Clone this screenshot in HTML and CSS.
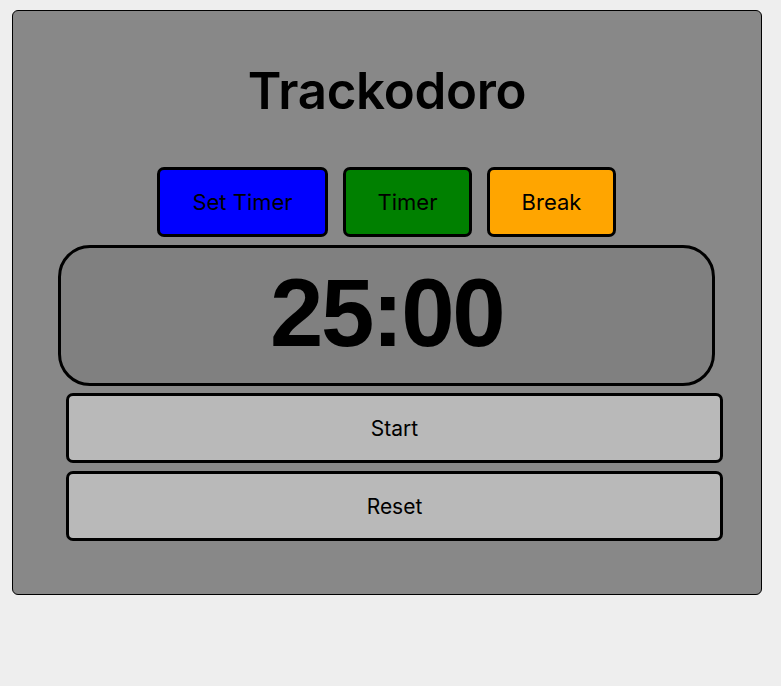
FILE: index.html
```html
<!DOCTYPE html>
<html lang="en">
<head>
<meta charset="utf-8">
<title>Trackodoro</title>
<link rel="stylesheet" href="styles.css">
</head>
<body>
<main class="card">
  <h1 class="title">Trackodoro</h1>
  <div class="modes">
    <button class="mode mode-set">Set Timer</button>
    <button class="mode mode-timer">Timer</button>
    <button class="mode mode-break">Break</button>
  </div>
  <div class="display">25:00</div>
  <div class="controls">
    <button class="control">Start</button>
    <button class="control">Reset</button>
  </div>
</main>
</body>
</html>
```
FILE: styles.css
```css
* { box-sizing: border-box; }
html, body { margin: 0; padding: 0; }
body {
  background: #eeeeee;
  font-family: "Inter", "Liberation Sans", sans-serif;
  color: #000;
}
.card {
  margin: 10px 0 0 12px;
  width: 750px;
  height: 585px;
  background: #888888;
  border: 1px solid #000;
  border-radius: 6px;
  display: flex;
  flex-direction: column;
  align-items: center;
}
.title {
  margin: 50px 0 0;
  font-size: 51px;
  line-height: 60px;
  font-weight: 600;
  letter-spacing: -0.3px;
}
.modes {
  margin: 46px 1px 0 0;
  display: flex;
  gap: 15px;
}
.mode {
  height: 70px;
  border: 3px solid #000;
  border-radius: 7px;
  font-family: inherit;
  font-size: 22px;
  font-weight: 400;
  color: #000;
  padding: 0;
}
.mode-set { width: 171px; background: #0000ff; }
.mode-timer { width: 129px; background: #008000; }
.mode-break { width: 129px; background: #ffa500; }
.display {
  margin: 8px 1px 0 0;
  width: 657px;
  height: 141px;
  border: 3px solid #000;
  border-radius: 32px;
  background: #808080;
  display: flex;
  align-items: center;
  justify-content: center;
  padding-bottom: 6px;
  font-family: "Liberation Sans", Arial, sans-serif;
  font-weight: 700;
  font-size: 96px;
  letter-spacing: -2.5px;
}
.controls {
  margin: 7px 1px 0 16px;
  width: 657px;
  display: flex;
  flex-direction: column;
  gap: 8px;
}
.control {
  height: 70px;
  border: 3px solid #000;
  border-radius: 7px;
  background: #b9b9b9;
  font-family: inherit;
  font-size: 21px;
  color: #000;
}
```
